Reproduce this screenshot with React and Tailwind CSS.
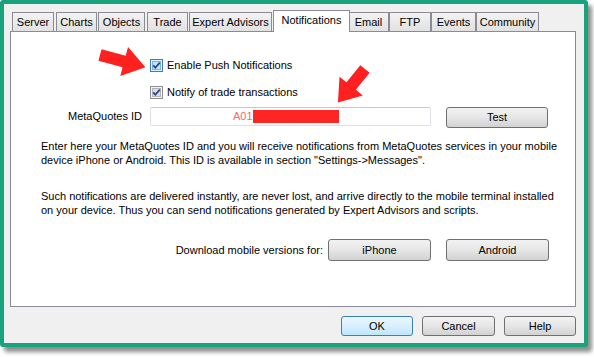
import React from "react";

const font = { fontFamily: '"Liberation Sans", Arial, sans-serif' };

function Tab({ label, w, ml = 0, active = false }) {
  if (active) {
    return (
      <div
        className="relative z-10 h-[22px] -mb-px -mx-[2px] flex items-center justify-center border border-b-0 border-[#898c95] bg-white text-[11px] text-black pb-[2px]"
        style={{ width: w + 4, marginLeft: ml }}
      >
        {label}
      </div>
    );
  }
  return (
    <div
      className="h-[19px] flex items-center justify-center border border-b-0 border-[#898c95] bg-gradient-to-b from-[#f3f3f3] to-[#e1e1e1] text-[11px] text-black"
      style={{ width: w, marginLeft: ml }}
    >
      {label}
    </div>
  );
}

function Btn({ children, w, h = 21, def = false }) {
  return (
    <div
      className={
        "flex items-center justify-center rounded-[3px] border text-[11px] text-black " +
        (def
          ? "border-[#3c7fb1] bg-gradient-to-b from-[#eaf6fd] via-[#d9f0fc] to-[#bee6fd]"
          : "border-[#707070] bg-gradient-to-b from-[#f2f2f2] via-[#e6e6e6] to-[#d2d2d2]")
      }
      style={{ width: w, height: h }}
    >
      {children}
    </div>
  );
}

function Check({ hover = false }) {
  return (
    <svg width="13" height="13" viewBox="0 0 13 13" className="shrink-0">
      <rect x="0.5" y="0.5" width="12" height="12" fill={hover ? "#dff2fd" : "#f4f4f4"} stroke={hover ? "#3c7fb1" : "#8e8f8f"} />
      <rect x="2.5" y="2.5" width="8" height="8" fill={hover ? "#c4e3f7" : "#dcdcdc"} stroke={hover ? "#7fb4d8" : "#b5b5b5"} />
      <path d="M3.3 6.4 L5.3 8.8 L9.8 3.6" fill="none" stroke="#21409a" strokeWidth="1.7" />
    </svg>
  );
}

export default function App() {
  return (
    <div className="relative w-[594px] h-[358px] bg-white overflow-hidden" style={font}>
      <div className="w-[588px] h-[347px] rounded-[3px] border-[4px] border-[#18a37d] bg-[#f0f0f0] shadow-[4px_5px_4px_rgba(0,0,0,0.45)] flex flex-col pt-[6px] pl-[6px] pr-[8px]">
        {/* Tabs */}
        <div className="flex items-end h-[21px] pl-[2px]">
          <Tab label="Server" w={42} />
          <Tab label="Charts" w={41} ml={2} />
          <Tab label="Objects" w={47} ml={1} />
          <Tab label="Trade" w={41} ml={2} />
          <Tab label="Expert Advisors" w={83} ml={1} />
          <Tab label="Notifications" w={73} ml={1} active />
          <Tab label="Email" w={41} />
          <Tab label="FTP" w={42} />
          <Tab label="Events" w={45} />
          <Tab label="Community" w={63} />
        </div>
        {/* Panel */}
        <div className="h-[276px] border border-[#898c95] bg-white text-[11px] text-black flex flex-col">
          <div className="mt-[27px] pl-[139px] flex items-center gap-[4px] h-[13px]">
            <Check hover />
            <span>Enable Push Notifications</span>
          </div>
          <div className="mt-[14px] pl-[139px] flex items-center gap-[4px] h-[13px]">
            <Check />
            <span>Notify of trade transactions</span>
          </div>
          <div className="mt-[8px] flex items-start h-[21px]">
            <div className="w-[139px] h-[19px] flex items-center justify-end pr-[8px]">MetaQuotes ID</div>
            <div className="w-[281px] h-[19px] rounded-[2px] border border-[#dde1e6] border-t-[#c7cbd1] flex items-center pl-[82px]">
              <span className="text-[#ec6b6b]">A01</span>
              <span className="w-[86px] h-[13px] bg-[#ff2525]" />
            </div>
            <div className="ml-[15px]">
              <Btn w={102} h={21}>Test</Btn>
            </div>
          </div>
          <div className="mt-[11px] pl-[30px] leading-[14px] whitespace-nowrap">
            Enter here your MetaQuotes ID and you will receive notifications from MetaQuotes services in your mobile
            <br />
            device iPhone or Android. This ID is available in section "Settings-&gt;Messages".
          </div>
          <div className="mt-[22px] pl-[30px] leading-[14px] whitespace-nowrap">
            Such notifications are delivered instantly, are never lost, and arrive directly to the mobile terminal installed
            <br />
            on your device. Thus you can send notifications generated by Expert Advisors and scripts.
          </div>
          <div className="mt-[22px] flex items-center justify-end pr-[26px]">
            <span className="mr-[5px]">Download mobile versions for:</span>
            <Btn w={103} h={22}>iPhone</Btn>
            <div className="ml-[15px]">
              <Btn w={103} h={22}>Android</Btn>
            </div>
          </div>
        </div>
        {/* Bottom buttons */}
        <div className="mt-[9px] flex justify-end gap-[9px]">
          <Btn w={72} h={20} def>OK</Btn>
          <Btn w={73} h={20}>Cancel</Btn>
          <Btn w={72} h={20}>Help</Btn>
        </div>
      </div>

      {/* Red annotation arrows */}
      <svg className="absolute left-0 top-0 pointer-events-none" width="594" height="358">
        <polygon
          transform="translate(100 55) rotate(15)"
          points="0,-6 25,-6 25,-15 47,0 25,15 25,6 0,6"
          fill="#ff2020"
        />
        <polygon
          transform="translate(365 69) rotate(129)"
          points="0,-6 22,-6 22,-15 43,0 22,15 22,6 0,6"
          fill="#ff2020"
        />
      </svg>
    </div>
  );
}
